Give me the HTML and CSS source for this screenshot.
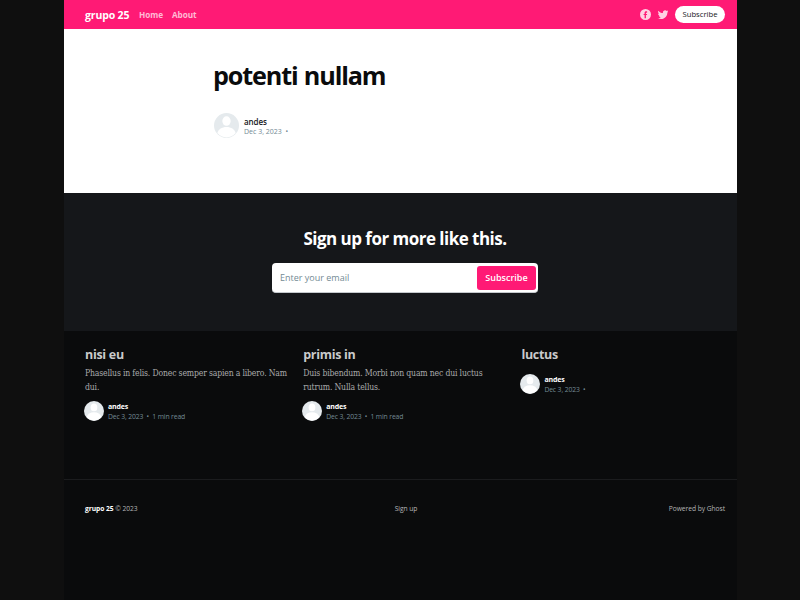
FILE: index.html
```html
<!DOCTYPE html>
<html lang="en">
<head>
<meta charset="utf-8">
<title>potenti nullam</title>
<link rel="stylesheet" href="styles.css">
</head>
<body>
<svg width="0" height="0" class="defs" aria-hidden="true">
  <symbol id="avatar" viewBox="0 0 24 24">
    <circle cx="12" cy="12" r="12" fill="#e5eaed"/>
    <ellipse cx="12" cy="7.700" rx="4" ry="4.600" fill="#fff"/>
    <path d="M3.200 19.200C4.200 15.600 7.500 13.400 12 13.400s7.800 2.200 8.800 5.800A11.300 11.300 0 0 1 3.200 19.200Z" fill="#fff"/>
  </symbol>
</svg>
<div class="site">
  <header class="head">
    <a class="logo">grupo 25</a>
    <nav class="nav"><a>Home</a><a>About</a></nav>
    <div class="actions">
      <svg class="facebook" viewBox="0 0 32 32"><path d="M16 0a16 16 0 1 0 0 32 16 16 0 0 0 0-32zm4.700 10.700h-2c-1 0-1.400.5-1.400 1.400v2.200h3.400l-.4 3.500h-3V27h-4v-9.200H10.500v-3.500h2.800v-2.800c0-3.100 1.700-4.800 4.800-4.800h2.600v4z"/></svg>
      <svg class="twitter" viewBox="0 0 32 32"><path d="M30.100 7.300c0 .3 0 .6 0 .8 0 8.500-6.500 18.400-18.400 18.400-3.700 0-7.100-1.100-9.900-2.900 3.500.4 6.900-.6 9.600-2.700-2.900-.1-5.200-1.900-6-4.500 1 .2 1.900.1 2.900-.1-3-.6-5.200-3.200-5.200-6.400.9.500 1.900.8 2.900.8-2.900-1.900-3.700-5.700-2-8.600 3.300 4.100 8 6.500 13.300 6.800-1-4.300 2.300-7.900 6.300-7.900 1.900 0 3.500.8 4.700 2 1.500-.3 2.900-.8 4.100-1.600-.5 1.500-1.500 2.800-2.800 3.600 1.300-.2 2.500-.5 3.700-1-.9 1.300-1.900 2.400-3.200 3.300z"/></svg>
      <a class="pill">Subscribe</a>
    </div>
  </header>
  <main class="article">
    <h1>potenti nullam</h1>
    <div class="byline">
      <svg class="face"><use href="#avatar"/></svg>
      <div class="meta"><b>andes</b><span>Dec 3, 2023 &nbsp;•</span></div>
    </div>
  </main>
  <section class="signup">
    <h2>Sign up for more like this.</h2>
    <div class="form"><span class="hint">Enter your email</span><a class="button">Subscribe</a></div>
  </section>
  <section class="more">
    <article class="card">
      <h3>nisi eu</h3>
      <p>Phasellus in felis. Donec semper sapien a libero. Nam<br>dui.</p>
      <div class="byline"><svg class="face"><use href="#avatar"/></svg>
        <div class="meta"><b>andes</b><span>Dec 3, 2023 &nbsp;•&nbsp; 1 min read</span></div></div>
    </article>
    <article class="card">
      <h3>primis in</h3>
      <p>Duis bibendum. Morbi non quam nec dui luctus<br>rutrum. Nulla tellus.</p>
      <div class="byline"><svg class="face"><use href="#avatar"/></svg>
        <div class="meta"><b>andes</b><span>Dec 3, 2023 &nbsp;•&nbsp; 1 min read</span></div></div>
    </article>
    <article class="card">
      <h3>luctus</h3>
      <div class="byline"><svg class="face"><use href="#avatar"/></svg>
        <div class="meta"><b>andes</b><span>Dec 3, 2023 &nbsp;•</span></div></div>
    </article>
  </section>
  <footer class="foot">
    <div><b>grupo 25</b> © 2023</div><a class="mid">Sign up</a><a class="right">Powered by Ghost</a>
  </footer>
</div>
</body>
</html>
```
FILE: styles.css
```css
* { box-sizing: border-box; }
body { margin: 0; background: #0f0f0f; font-family: "Open Sans", "Noto Sans", sans-serif; }
h1, h2, h3, p { margin: 0; white-space: nowrap; }
svg { display: block; flex: none; }
.defs { position: absolute; }
.site { width: 673px; height: 600px; margin-left: 64px; background: #0a0b0c; display: flex; flex-direction: column; overflow: hidden; }
.head { height: 29px; background: #ff1a75; color: #fff; display: flex; align-items: center; padding: 0 12px 0 21px; white-space: nowrap; }
.logo { width: 54px; font-size: 10.500px; font-weight: 700; letter-spacing: -.15px; }
.nav { display: flex; gap: 9px; font-size: 8.200px; font-weight: 700; letter-spacing: -.05px; color: #ffbad6; }
.actions { margin-left: auto; display: flex; align-items: center; fill: #ffd1e3; }
.facebook { width: 11px; height: 11px; margin-right: 6px; }
.twitter { width: 11px; height: 11px; margin: 1px 7px 0 0; }
.pill { width: 50px; height: 17px; border-radius: 9px; background: #fff; color: #15171a; font-size: 7.700px; line-height: 17px; text-align: center; }
.article { height: 164px; background: #fff; padding: 26px 0 0 149px; }
h1 { font-size: 25.200px; line-height: 40px; font-weight: 700; color: #0a0b0c; letter-spacing: -1.150px; word-spacing: 1px; }
.byline { display: flex; align-items: center; height: 20px; }
.face { width: 20px; height: 20px; margin-left: -1px; }
.meta { margin-left: 4px; display: flex; flex-direction: column; font-size: 6.800px; line-height: 10px; letter-spacing: -.13px; white-space: nowrap; color: #738a94; }
.meta b { color: #fff; font-weight: 700; font-size: 7px; }
.article .byline { margin-top: 18px; margin-left: 2px; height: 25px; }
.article .face { width: 25px; height: 25px; }
.article .meta { margin-left: 5px; padding-top: 1px; font-size: 7px; letter-spacing: 0; }
.article .meta b { font-weight: 600; color: #15171a; font-size: 8px; line-height: 11px; letter-spacing: -.1px; }
.signup { height: 138px; background: #15171a; display: flex; flex-direction: column; align-items: center; padding-top: 34px; padding-left: 9px; }
h2 { color: #fff; font-size: 17px; line-height: 24px; font-weight: 700; letter-spacing: -.52px; }
.form { width: 266px; height: 30px; margin-top: 12px; border-radius: 4px; background: #fff; border-bottom: 1px solid #c5c9cd; display: flex; align-items: center; justify-content: space-between; padding: 0 2px 0 8px; }
.hint { font-size: 9px; color: #738a94; }
.button { width: 59px; height: 24px; border-radius: 3px; background: #ff1a75; color: #fff; text-align: center; font-size: 9px; font-weight: 600; line-height: 24px; }
.more { height: 148px; display: grid; grid-template-columns: 202px 202px 204px; column-gap: 16.200px; padding: 15px 0 0 21px; }
h3 { color: #c9cacb; font-size: 12.500px; line-height: 17px; font-weight: 700; letter-spacing: -.3px; }
.card p { margin-top: 3px; font-family: "DejaVu Serif Condensed", "DejaVu Serif", serif; font-size: 8.600px; letter-spacing: -.17px; line-height: 14px; color: #a9aaab; }
.card .byline { margin-top: 7px; }
.card .meta { padding-top: 2px; }
.card h3 + .byline { margin-top: 11px; }
.foot { border-top: 1px solid #1b1c1e; height: 57px; padding: 0 12px 0 21px; display: grid; grid-template-columns: 1fr auto 1fr; align-items: center; font-size: 6.700px; letter-spacing: -.05px; color: #b5b6b7; white-space: nowrap; }
.foot b { color: #fff; }
.mid { padding-left: 2px; }
.right { text-align: right; }
```
